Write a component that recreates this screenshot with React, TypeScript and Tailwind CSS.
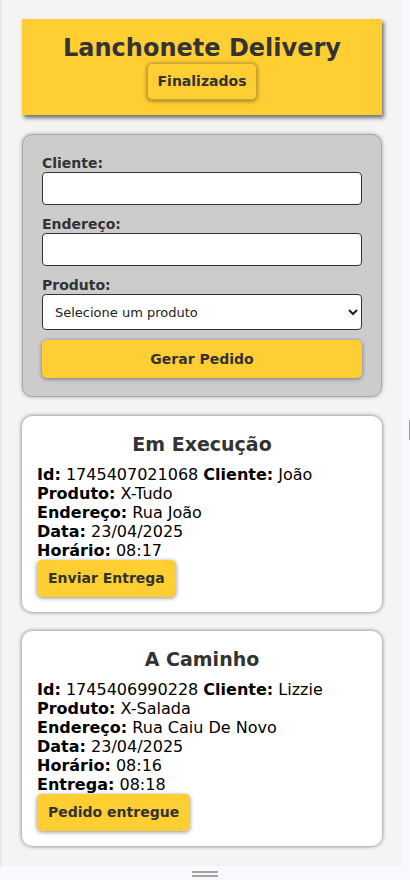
import React from 'react'

const font = "font-['DejaVu_Sans',Verdana,sans-serif]"

const pedidos = [
  {
    titulo: 'Em Execução',
    id: '1745407021068',
    cliente: 'João',
    produto: 'X-Tudo',
    endereco: 'Rua João',
    data: '23/04/2025',
    horario: '08:17',
    acao: 'Enviar Entrega',
  },
  {
    titulo: 'A Caminho',
    id: '1745406990228',
    cliente: 'Lizzie',
    produto: 'X-Salada',
    endereco: 'Rua Caiu De Novo',
    data: '23/04/2025',
    horario: '08:16',
    entrega: '08:18',
    acao: 'Pedido entregue',
  },
]

type Pedido = (typeof pedidos)[number] & { entrega?: string }

function YellowButton({ children, className = '' }: { children: React.ReactNode; className?: string }) {
  return (
    <button
      type="button"
      className={`rounded-[5px] bg-[#ffce33] text-[14px] font-bold text-[#333] shadow-[0_1px_4px_rgba(0,0,0,0.45)] ${className}`}
    >
      {children}
    </button>
  )
}

function Field({ label, children }: { label: string; children: React.ReactNode }) {
  return (
    <div className="flex flex-col">
      <label className="text-[14px] font-bold leading-[17px] text-[#333]">{label}</label>
      {children}
    </div>
  )
}

function PedidoCard({ pedido }: { pedido: Pedido }) {
  return (
    <div className="rounded-[10px] bg-white px-[15px] pt-[17px] pb-[15px] shadow-[0_0_4px_rgba(0,0,0,0.55)]">
      <h2 className="mb-[9px] text-center text-[19px] font-bold leading-[23px] text-[#333]">{pedido.titulo}</h2>
      <div className="text-[16px] leading-[19px] text-black">
        <p>
          <b>Id:</b> {pedido.id} <b>Cliente:</b> {pedido.cliente}
        </p>
        <p>
          <b>Produto:</b> {pedido.produto}
        </p>
        <p>
          <b>Endereço:</b> {pedido.endereco}
        </p>
        <p>
          <b>Data:</b> {pedido.data}
        </p>
        <p>
          <b>Horário:</b> {pedido.horario}
        </p>
        {pedido.entrega ? (
          <p>
            <b>Entrega:</b> {pedido.entrega}
          </p>
        ) : null}
      </div>
      <YellowButton className="h-[37px] px-[11px]">{pedido.acao}</YellowButton>
    </div>
  )
}

export default function App() {
  return (
    <div className={`flex h-[880px] w-[410px] flex-col overflow-hidden bg-[#f7f9fc] ${font}`}>
      <div className="flex h-[866px] shrink-0">
        <div className="w-[2px] shrink-0 bg-[#e2e7ee]" />
        <main className="flex w-[400px] shrink-0 flex-col gap-[19px] overflow-hidden bg-[#f4f4f4] px-[20px] pt-[19px]">
          <header className="flex flex-col items-center bg-[#ffce33] pt-[15px] pb-[15px] shadow-[2px_3px_4px_rgba(0,0,0,0.55)]">
            <h1 className="text-[24px] font-bold leading-[29px] text-[#333]">Lanchonete Delivery</h1>
            <YellowButton className="h-[37px] border border-[#c9a53a] px-[10px]">Finalizados</YellowButton>
          </header>

          <form className="flex flex-col gap-[11px] rounded-[10px] border border-[#a8a8a8] bg-[#cccccc] px-[19px] pt-[20px] pb-[18px] shadow-[0_0_4px_rgba(0,0,0,0.3)]">
            <Field label="Cliente:">
              <input className="h-[33px] rounded-[4px] border border-[#333] bg-white px-2 text-[14px]" />
            </Field>
            <Field label="Endereço:">
              <input className="h-[33px] rounded-[4px] border border-[#333] bg-white px-2 text-[14px]" />
            </Field>
            <Field label="Produto:">
              <select className="h-[36px] rounded-[4px] border border-[#333] bg-white pl-[8px] text-[13px] text-[#222]">
                <option>Selecione um produto</option>
                <option>X-Tudo</option>
                <option>X-Salada</option>
              </select>
            </Field>
            <YellowButton className="-mt-px h-[38px] w-full">Gerar Pedido</YellowButton>
          </form>

          {pedidos.map((p) => (
            <PedidoCard key={p.id} pedido={p} />
          ))}
        </main>
        <div className="relative w-[8px] shrink-0 bg-[#f7f9fc]">
          <div className="absolute top-[420px] right-0 h-[20px] w-px bg-[#9a9a9a]" />
        </div>
      </div>
      <div className="flex flex-1 flex-col items-center justify-center gap-[2px] pt-px">
        <div className="h-[2px] w-[26px] bg-[#a3a3a3]" />
        <div className="h-[2px] w-[26px] bg-[#a3a3a3]" />
      </div>
    </div>
  )
}
